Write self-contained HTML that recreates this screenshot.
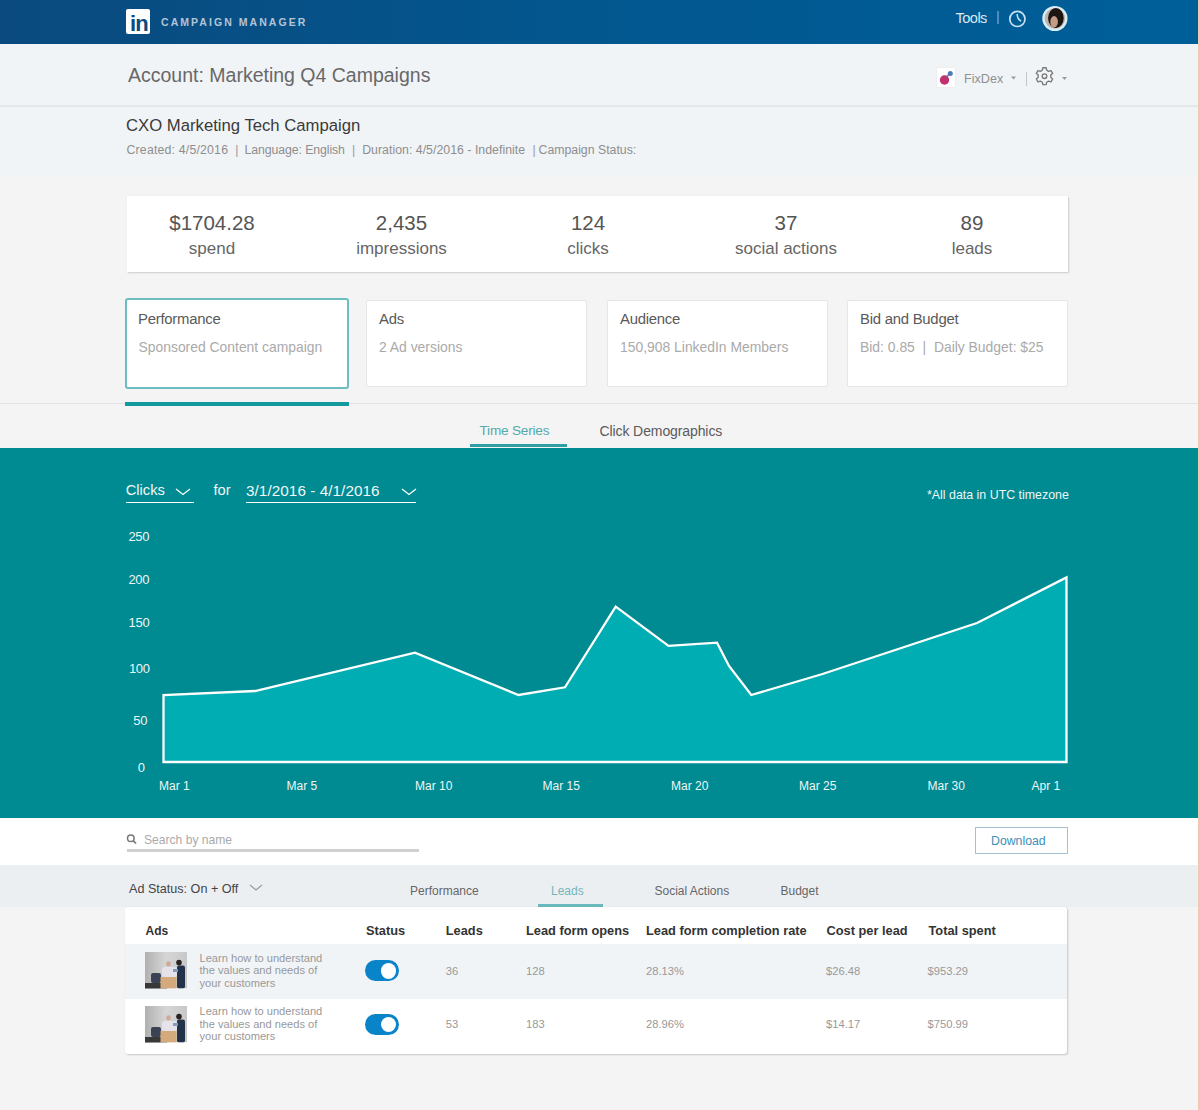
<!DOCTYPE html>
<html><head><meta charset="utf-8">
<style>
*{margin:0;padding:0;box-sizing:border-box}
html,body{width:1200px;height:1110px;overflow:hidden;background:#f4f4f4;font-family:"Liberation Sans",sans-serif}
.a{position:absolute}
.t{position:absolute;white-space:nowrap;line-height:1}
.c{transform:translateX(-50%)}
</style></head><body>
<!-- header -->
<div class="a" style="left:0;top:0;width:1200px;height:44px;background:linear-gradient(90deg,#0a4a7e 0%,#02578f 50%,#005f99 100%)"></div>
<div class="a" style="left:126px;top:9px;width:24px;height:25px;background:#fff;border-radius:2px"></div>
<div class="t" style="left:161px;top:17.2px;font-size:10.5px;font-weight:bold;letter-spacing:2.05px;color:#b3c4d6">CAMPAIGN MANAGER</div>
<div class="t" style="left:955.5px;top:11px;font-size:14.6px;letter-spacing:-0.55px;color:#dbe8f2">Tools</div>
<div class="a" style="left:997px;top:11px;width:2px;height:13px;background:#4f8bbd"></div>

<!-- account bar placeholder -->
<div class="a" style="left:0;top:44px;width:1200px;height:132px;background:#f1f4f7"></div>
<div class="a" style="left:0;top:105px;width:1200px;height:2px;background:#e3e7ea"></div>
<div class="t" style="left:128px;top:66px;font-size:19.5px;color:#686868">Account: Marketing Q4 Campaigns</div>
<div class="a" style="left:936px;top:67px;width:20px;height:21px;background:#fff;border:1px solid #eee"></div>
<div class="t" style="left:964px;top:72.5px;font-size:12.6px;color:#8f8f8f">FixDex</div>
<div class="a" style="left:1025.5px;top:72px;width:1px;height:14px;background:#c4c4c4"></div>

<div class="t" style="left:126px;top:118px;font-size:16.7px;color:#3a3a3a">CXO Marketing Tech Campaign</div>
<div class="t" style="left:126.5px;top:144.3px;font-size:12.3px;letter-spacing:0.19px;color:#8e8e8e">Created: 4/5/2016</div>
<div class="t" style="left:235.3px;top:144.3px;font-size:12.3px;color:#9a9a9a">|</div>
<div class="t" style="left:244.5px;top:144.3px;font-size:12.3px;letter-spacing:-0.09px;color:#8e8e8e">Language: English</div>
<div class="t" style="left:351.9px;top:144.3px;font-size:12.3px;color:#9a9a9a">|</div>
<div class="t" style="left:362.2px;top:144.3px;font-size:12.3px;letter-spacing:0.03px;color:#8e8e8e">Duration: 4/5/2016 - Indefinite</div>
<div class="t" style="left:532.6px;top:144.3px;font-size:12.3px;color:#9a9a9a">|</div>
<div class="t" style="left:538.5px;top:144.3px;font-size:12.3px;color:#8e8e8e">Campaign Status:</div>


<!-- icons -->
<svg class="a" style="left:0;top:0" width="1200" height="110" viewBox="0 0 1200 110">
<text x="130" y="30.8" font-family="Liberation Sans" font-weight="bold" font-size="22" fill="#0b4a7e" letter-spacing="-0.8">in</text>
<circle cx="1017.4" cy="18.9" r="7.6" fill="none" stroke="#c6e2f4" stroke-width="1.7"/>
<path d="M1017.2,14 Q1017,18.8 1021.2,21.2" fill="none" stroke="#c6e2f4" stroke-width="1.5"/>
<g transform="translate(1054.9,18.5)">
<circle r="12.6" fill="#dcecf4"/>
<circle r="10.2" fill="#b9b4ae"/>
<ellipse cx="1" cy="-0.5" rx="7.8" ry="10" fill="#1d1511"/>
<ellipse cx="-0.8" cy="3.2" rx="3.8" ry="5.6" fill="#c49c86"/>
</g>
<circle cx="944.5" cy="80" r="4.7" fill="#c2306e"/>
<circle cx="950.3" cy="73.6" r="2.5" fill="#4a7cbc"/>
<line x1="946" y1="77.5" x2="949.5" y2="74" stroke="#7a5aa0" stroke-width="1.4"/>
<polygon points="1011,76.5 1016,76.5 1013.5,79.5" fill="#999"/>
<polygon points="1062,77 1067,77 1064.5,80" fill="#999"/>
<g transform="translate(1044.5,76.2)" fill="none" stroke="#7a7a7a" stroke-width="1.35" stroke-linejoin="round">
<path d="M-2.19,-6.01 L-1.64,-8.44 L1.64,-8.44 L2.19,-6.01 L4.11,-4.90 L6.49,-5.64 L8.13,-2.80 L6.30,-1.11 L6.30,1.11 L8.13,2.80 L6.49,5.64 L4.11,4.90 L2.19,6.01 L1.64,8.44 L-1.64,8.44 L-2.19,6.01 L-4.11,4.90 L-6.49,5.64 L-8.13,2.80 L-6.30,1.11 L-6.30,-1.11 L-8.13,-2.80 L-6.49,-5.64 L-4.11,-4.90 Z"/>
<circle r="2.3"/>
</g>
</svg>


<!-- stats card -->
<div class="a" style="left:126.5px;top:195.5px;width:941px;height:76px;background:#fff;box-shadow:1px 1px 1.5px rgba(0,0,0,.16), 0 0 1px rgba(0,0,0,.05)"></div>
<div class="t c" style="left:212px;top:212.6px;font-size:20.5px;color:#555">$1704.28</div>
<div class="t c" style="left:212px;top:240.2px;font-size:17px;color:#666">spend</div>
<div class="t c" style="left:401.5px;top:212.6px;font-size:20.5px;color:#555">2,435</div>
<div class="t c" style="left:401.5px;top:240.2px;font-size:17px;color:#666">impressions</div>
<div class="t c" style="left:588px;top:212.6px;font-size:20.5px;color:#555">124</div>
<div class="t c" style="left:588px;top:240.2px;font-size:17px;color:#666">clicks</div>
<div class="t c" style="left:786px;top:212.6px;font-size:20.5px;color:#555">37</div>
<div class="t c" style="left:786px;top:240.2px;font-size:17px;color:#666">social actions</div>
<div class="t c" style="left:972px;top:212.6px;font-size:20.5px;color:#555">89</div>
<div class="t c" style="left:972px;top:240.2px;font-size:17px;color:#666">leads</div>

<!-- cards -->
<div class="a" style="left:125px;top:298px;width:224px;height:91px;background:#fff;border:2px solid #6dbcc0;border-radius:3px"></div>
<div class="a" style="left:366px;top:300px;width:221px;height:87px;background:#fff;border:1px solid #e6e6e6;border-radius:2px"></div>
<div class="a" style="left:607px;top:300px;width:221px;height:87px;background:#fff;border:1px solid #e6e6e6;border-radius:2px"></div>
<div class="a" style="left:847px;top:300px;width:221px;height:87px;background:#fff;border:1px solid #e6e6e6;border-radius:2px"></div>
<div class="t" style="left:138px;top:312px;font-size:14.9px;letter-spacing:-0.25px;color:#5a5a5a">Performance</div>
<div class="t" style="left:138.5px;top:341px;font-size:13.9px;color:#aaa">Sponsored Content campaign</div>
<div class="t" style="left:379px;top:312px;font-size:14.9px;letter-spacing:-0.25px;color:#5a5a5a">Ads</div>
<div class="t" style="left:379px;top:341px;font-size:13.9px;color:#aaa">2 Ad versions</div>
<div class="t" style="left:620px;top:312px;font-size:14.9px;letter-spacing:-0.25px;color:#5a5a5a">Audience</div>
<div class="t" style="left:620px;top:341px;font-size:13.9px;color:#aaa">150,908 LinkedIn Members</div>
<div class="t" style="left:860px;top:312px;font-size:14.9px;letter-spacing:-0.25px;color:#5a5a5a">Bid and Budget</div>
<div class="t" style="left:860px;top:341px;font-size:13.9px;color:#aaa;white-space:pre">Bid: 0.85  |  Daily Budget: $25</div>

<div class="a" style="left:0;top:403px;width:1200px;height:1px;background:#e2e2e2"></div>
<div class="a" style="left:125px;top:402px;width:224px;height:4px;background:#13999e"></div>
<div class="t" style="left:479.5px;top:423.5px;font-size:13.6px;letter-spacing:-0.2px;color:#55a9ad">Time Series</div>
<div class="t" style="left:599.5px;top:423.5px;font-size:14px;letter-spacing:-0.1px;color:#5a5a5a">Click Demographics</div>
<div class="a" style="left:470px;top:444px;width:97px;height:3px;background:#2ea0a5"></div>

<!-- teal chart section -->
<div class="a" style="left:0;top:448px;width:1198px;height:370px;background:#008a91"></div>


<!-- chart -->
<svg class="a" style="left:0;top:0" width="1200" height="1110" viewBox="0 0 1200 1110">
<polygon points="163.5,762 163.5,695 255,691 415,652.7 518.5,695 565,687.3 615.7,606.7 668.5,645.8 717,642.7 729,666 751.3,695 822.5,674 977,623 1066.5,577.4 1066.5,762" fill="#00adb2" stroke="#fff" stroke-width="2.3" stroke-linejoin="miter"/>
<line x1="126" y1="502.5" x2="194" y2="502.5" stroke="#fff" stroke-width="1"/>
<line x1="246" y1="502.5" x2="416" y2="502.5" stroke="#fff" stroke-width="1"/>
<polyline points="176,489 183,494.5 190,489" fill="none" stroke="#fff" stroke-width="1.3"/>
<polyline points="402,489 409,494.5 416,489" fill="none" stroke="#fff" stroke-width="1.3"/>
</svg>
<div class="t" style="left:125.7px;top:483px;font-size:14.7px;color:#f2f8f8">Clicks</div>
<div class="t" style="left:213.5px;top:483px;font-size:14.7px;color:#f2f8f8">for</div>
<div class="t" style="left:246px;top:483px;font-size:15.3px;letter-spacing:0.05px;color:#f2f8f8">3/1/2016 - 4/1/2016</div>
<div class="t" style="left:927px;top:489px;font-size:12.4px;color:#eef6f6">*All data in UTC timezone</div>
<div class="t c" style="left:138.8px;top:529.6px;font-size:13px;letter-spacing:-0.3px;color:#eef6f6">250</div>
<div class="t c" style="left:138.8px;top:572.6px;font-size:13px;letter-spacing:-0.3px;color:#eef6f6">200</div>
<div class="t c" style="left:139px;top:616px;font-size:13px;letter-spacing:-0.3px;color:#eef6f6">150</div>
<div class="t c" style="left:139.3px;top:661.6px;font-size:13px;letter-spacing:-0.3px;color:#eef6f6">100</div>
<div class="t c" style="left:140.3px;top:713.8px;font-size:13px;letter-spacing:-0.3px;color:#eef6f6">50</div>
<div class="t c" style="left:141.3px;top:760.6px;font-size:13px;letter-spacing:-0.3px;color:#eef6f6">0</div>
<div class="t" style="left:159px;top:780px;font-size:12px;color:#eef6f6">Mar 1</div>
<div class="t" style="left:286.5px;top:780px;font-size:12px;color:#eef6f6">Mar 5</div>
<div class="t" style="left:415px;top:780px;font-size:12px;color:#eef6f6">Mar 10</div>
<div class="t" style="left:542.5px;top:780px;font-size:12px;color:#eef6f6">Mar 15</div>
<div class="t" style="left:671px;top:780px;font-size:12px;color:#eef6f6">Mar 20</div>
<div class="t" style="left:799px;top:780px;font-size:12px;color:#eef6f6">Mar 25</div>
<div class="t" style="left:927.5px;top:780px;font-size:12px;color:#eef6f6">Mar 30</div>
<div class="t" style="left:1031.5px;top:780px;font-size:12px;color:#eef6f6">Apr 1</div>

<!-- white search bar -->
<div class="a" style="left:0;top:818px;width:1198px;height:47px;background:#fff"></div>
<div class="t" style="left:144px;top:834px;font-size:12.1px;color:#aaa">Search by name</div>
<div class="a" style="left:127px;top:849px;width:292px;height:3px;background:#d0d0d0"></div>
<div class="a" style="left:975px;top:827px;width:93px;height:27px;border:1px solid #a4c0d3;background:#fff"></div>
<div class="t" style="left:991px;top:834.5px;font-size:12.3px;color:#3d8fb8">Download</div>

<!-- table tabs -->
<div class="a" style="left:0;top:865px;width:1198px;height:42px;background:#eceff2"></div>
<div class="t" style="left:129px;top:883px;font-size:12.6px;color:#444">Ad Status: On + Off</div>
<div class="t" style="left:410px;top:884.6px;font-size:12px;color:#666">Performance</div>
<div class="t" style="left:551px;top:884.6px;font-size:12px;color:#72b5b9">Leads</div>
<div class="t" style="left:654.5px;top:884.6px;font-size:12px;color:#666">Social Actions</div>
<div class="t" style="left:780.5px;top:884.6px;font-size:12px;color:#666">Budget</div>
<div class="a" style="left:538px;top:903.5px;width:65px;height:3px;background:#6ab9bd"></div>

<svg class="a" style="left:0;top:820px" width="300" height="80" viewBox="0 820 300 80">
<circle cx="130.8" cy="838.3" r="3.3" fill="none" stroke="#777" stroke-width="1.5"/>
<line x1="133.2" y1="840.7" x2="136" y2="843.5" stroke="#777" stroke-width="1.7"/>
<polyline points="250,885 256,890 262,885" fill="none" stroke="#999" stroke-width="1.1"/>
</svg>
<!-- table -->
<div class="a" style="left:125px;top:907px;width:942px;height:147px;background:#fff;border-radius:3px;box-shadow:1px 1px 2px rgba(0,0,0,.18), 0 0 1px rgba(0,0,0,.08)"></div>
<div class="a" style="left:125px;top:944px;width:942px;height:55px;background:#f0f4f7"></div>


<div class="t" style="left:145.5px;top:925px;font-size:12px;font-weight:bold;color:#333">Ads</div>
<div class="t" style="left:366px;top:924.8px;font-size:12.8px;font-weight:bold;color:#333">Status</div>
<div class="t" style="left:445.8px;top:924.8px;font-size:12.8px;font-weight:bold;color:#333">Leads</div>
<div class="t" style="left:526px;top:924.8px;font-size:12.8px;font-weight:bold;color:#333">Lead form opens</div>
<div class="t" style="left:646px;top:924.8px;font-size:12.8px;font-weight:bold;color:#333">Lead form completion rate</div>
<div class="t" style="left:826.5px;top:924.8px;font-size:12.8px;font-weight:bold;color:#333">Cost per lead</div>
<div class="t" style="left:928.5px;top:924.8px;font-size:12.8px;font-weight:bold;color:#333">Total spent</div>
<svg class="a" style="left:145px;top:952.3px" width="42" height="36.5" viewBox="0 0 42 36.5">
<defs><linearGradient id="bg952" x1="0" y1="0" x2="0" y2="1"><stop offset="0" stop-color="#c6c6c6"/><stop offset="0.6" stop-color="#c2c2c2"/><stop offset="1" stop-color="#8a8a8a"/></linearGradient>
<linearGradient id="lg952" x1="0" y1="0" x2="1" y2="0"><stop offset="0" stop-color="#b0b0b0"/><stop offset="0.5" stop-color="#d6d6d6"/><stop offset="1" stop-color="#c8c8c8"/></linearGradient>
<filter id="bl952" x="-10%" y="-10%" width="120%" height="120%"><feGaussianBlur stdDeviation="0.6"/></filter>
<clipPath id="cp952"><rect width="42" height="36.5"/></clipPath></defs>
<g clip-path="url(#cp952)"><rect width="42" height="36.5" fill="url(#lg952)"/>
<g filter="url(#bl952)">
<rect x="0" y="31" width="22" height="6" fill="#383838"/>
<rect x="6" y="21" width="10" height="10" rx="2" fill="#3b4352"/>
<rect x="17" y="15" width="15" height="10" rx="2.5" fill="#e6e2ea"/>
<ellipse cx="23.5" cy="11.8" rx="2.3" ry="2.6" fill="#cfa999"/>
<rect x="15.5" y="25" width="16" height="11.5" fill="#d4aa7c"/>
<ellipse cx="34" cy="10.6" rx="2.8" ry="2.9" fill="#2a2220"/>
<rect x="32" y="13.5" width="8" height="23" rx="2" fill="#22304a"/>
<rect x="28" y="17" width="5" height="3" fill="#7f9bbf"/>
</g></g>
</svg>
<div class="a" style="left:199.5px;top:951.8px;font-size:11.1px;line-height:12.6px;color:#999;white-space:nowrap">Learn how to understand<br>the values and needs of<br>your customers</div>
<div class="a" style="left:365px;top:960.3px;width:34px;height:21px;border-radius:11px;background:#0a84c8"></div>
<div class="a" style="left:380.5px;top:962.9px;width:15.8px;height:15.8px;border-radius:50%;background:#fff"></div>
<div class="t" style="left:445.8px;top:966.3px;font-size:11.2px;color:#999">36</div>
<div class="t" style="left:526px;top:966.3px;font-size:11.2px;color:#999">128</div>
<div class="t" style="left:646px;top:966.3px;font-size:11.2px;color:#999">28.13%</div>
<div class="t" style="left:826px;top:966.3px;font-size:11.2px;color:#999">$26.48</div>
<div class="t" style="left:927.5px;top:966.3px;font-size:11.2px;color:#999">$953.29</div>
<svg class="a" style="left:145px;top:1006.0px" width="42" height="36.5" viewBox="0 0 42 36.5">
<defs><linearGradient id="bg1006" x1="0" y1="0" x2="0" y2="1"><stop offset="0" stop-color="#c6c6c6"/><stop offset="0.6" stop-color="#c2c2c2"/><stop offset="1" stop-color="#8a8a8a"/></linearGradient>
<linearGradient id="lg1006" x1="0" y1="0" x2="1" y2="0"><stop offset="0" stop-color="#b0b0b0"/><stop offset="0.5" stop-color="#d6d6d6"/><stop offset="1" stop-color="#c8c8c8"/></linearGradient>
<filter id="bl1006" x="-10%" y="-10%" width="120%" height="120%"><feGaussianBlur stdDeviation="0.6"/></filter>
<clipPath id="cp1006"><rect width="42" height="36.5"/></clipPath></defs>
<g clip-path="url(#cp1006)"><rect width="42" height="36.5" fill="url(#lg1006)"/>
<g filter="url(#bl1006)">
<rect x="0" y="31" width="22" height="6" fill="#383838"/>
<rect x="6" y="21" width="10" height="10" rx="2" fill="#3b4352"/>
<rect x="17" y="15" width="15" height="10" rx="2.5" fill="#e6e2ea"/>
<ellipse cx="23.5" cy="11.8" rx="2.3" ry="2.6" fill="#cfa999"/>
<rect x="15.5" y="25" width="16" height="11.5" fill="#d4aa7c"/>
<ellipse cx="34" cy="10.6" rx="2.8" ry="2.9" fill="#2a2220"/>
<rect x="32" y="13.5" width="8" height="23" rx="2" fill="#22304a"/>
<rect x="28" y="17" width="5" height="3" fill="#7f9bbf"/>
</g></g>
</svg>
<div class="a" style="left:199.5px;top:1005.3px;font-size:11.1px;line-height:12.6px;color:#999;white-space:nowrap">Learn how to understand<br>the values and needs of<br>your customers</div>
<div class="a" style="left:365px;top:1014px;width:34px;height:21px;border-radius:11px;background:#0a84c8"></div>
<div class="a" style="left:380.5px;top:1016.6px;width:15.8px;height:15.8px;border-radius:50%;background:#fff"></div>
<div class="t" style="left:445.8px;top:1019.3px;font-size:11.2px;color:#999">53</div>
<div class="t" style="left:526px;top:1019.3px;font-size:11.2px;color:#999">183</div>
<div class="t" style="left:646px;top:1019.3px;font-size:11.2px;color:#999">28.96%</div>
<div class="t" style="left:826px;top:1019.3px;font-size:11.2px;color:#999">$14.17</div>
<div class="t" style="left:927.5px;top:1019.3px;font-size:11.2px;color:#999">$750.99</div>

<div class="a" style="left:1198px;top:0;width:2px;height:1110px;background:#efc9b1"></div>
</body></html>
